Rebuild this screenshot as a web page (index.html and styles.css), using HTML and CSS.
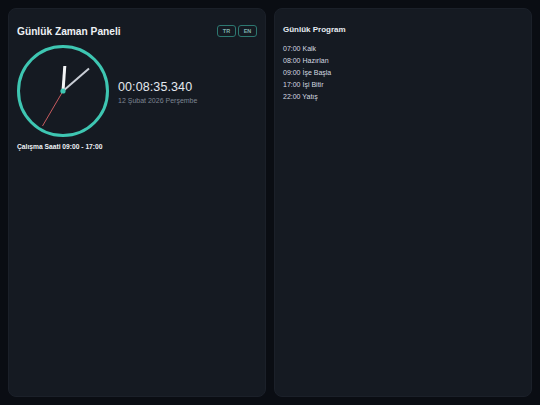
FILE: index.html
```html
<!DOCTYPE html>
<html lang="tr">
<head>
<meta charset="utf-8">
<title>Günlük Zaman Paneli</title>
<link rel="stylesheet" href="styles.css">
</head>
<body>
<main class="layout">
  <section class="panel panel-clock">
    <header class="panel-head">
      <h1 class="title">Günlük Zaman Paneli</h1>
      <div class="langs">
        <button class="lang">TR</button>
        <button class="lang">EN</button>
      </div>
    </header>
    <div class="clock-row">
      <svg class="clock" width="94" height="94" viewBox="0 0 94 94">
        <circle cx="47" cy="47" r="44.5" fill="none" stroke="#3ec6b2" stroke-width="3"/>
        <line x1="47" y1="47" x2="48.8" y2="22" stroke="#f2f4f6" stroke-width="3" stroke-linecap="butt"/>
        <line x1="47" y1="47" x2="73" y2="24.5" stroke="#c9ced6" stroke-width="2"/>
        <line x1="47" y1="47" x2="26.5" y2="82" stroke="#c65a5e" stroke-width="1"/>
        <circle cx="47" cy="47" r="2.6" fill="#3ec6b2"/>
      </svg>
      <div class="readout">
        <div class="time">00:08:35.340</div>
        <div class="date">12 Şubat 2026 Perşembe</div>
      </div>
    </div>
    <p class="hours">Çalışma Saati 09:00 - 17:00</p>
  </section>
  <section class="panel panel-program">
    <h2 class="subtitle">Günlük Program</h2>
    <ul class="schedule">
      <li>07:00 Kalk</li>
      <li>08:00 Hazırlan</li>
      <li>09:00 İşe Başla</li>
      <li>17:00 İşi Bitir</li>
      <li>22:00 Yatış</li>
    </ul>
  </section>
</main>
</body>
</html>
```
FILE: styles.css
```css
* { box-sizing: border-box; }
html, body { margin: 0; height: 100%; }
body {
  background: #0a0d13;
  font-family: "Liberation Sans", Arial, sans-serif;
  color: #e6eaf0;
}
.layout {
  height: 405px;
  padding: 8px;
  display: grid;
  grid-template-columns: 1fr 1fr;
  gap: 8px;
}
.panel {
  background: #151a22;
  border: 1px solid #1b2029;
  border-radius: 8px;
  padding: 16px 8px 8px 8px;
}
.panel-head {
  display: flex;
  align-items: center;
  justify-content: space-between;
  height: 12px;
}
.title {
  margin: 0;
  font-size: 10.2px;
  font-weight: bold;
  color: #eef1f5;
}
.langs { display: flex; gap: 2px; }
.lang {
  width: 19px;
  height: 12px;
  padding: 0;
  border: 1px solid #2d7770;
  border-radius: 3px;
  background: transparent;
  color: #7fb3ad;
  font-family: "Liberation Sans", Arial, sans-serif;
  font-size: 5.5px;
  font-weight: bold;
  line-height: 10px;
}
.clock-row {
  display: flex;
  align-items: center;
  gap: 8px;
  margin-top: 7px;
  margin-left: -1px;
}
.clock { display: block; flex: none; }
.readout { display: flex; flex-direction: column; gap: 2px; padding-top: 3px; }
.time {
  font-size: 12.5px;
  line-height: 14px;
  color: #e4e8ee;
  letter-spacing: 0.1px;
}
.date {
  font-size: 7px;
  line-height: 9px;
  color: #7d8592;
}
.hours {
  margin: 5px 0 0;
  font-size: 6.7px;
  font-weight: bold;
  color: #eef1f5;
}
.panel-program { padding-top: 16px; }
.subtitle {
  margin: 0 0 8px;
  font-size: 8px;
  line-height: 10px;
  font-weight: bold;
  color: #e6eaf0;
}
.schedule {
  list-style: none;
  margin: 0;
  padding: 0;
}
.schedule li {
  font-size: 7px;
  line-height: 12px;
  color: #d4d9e0;
}
```
